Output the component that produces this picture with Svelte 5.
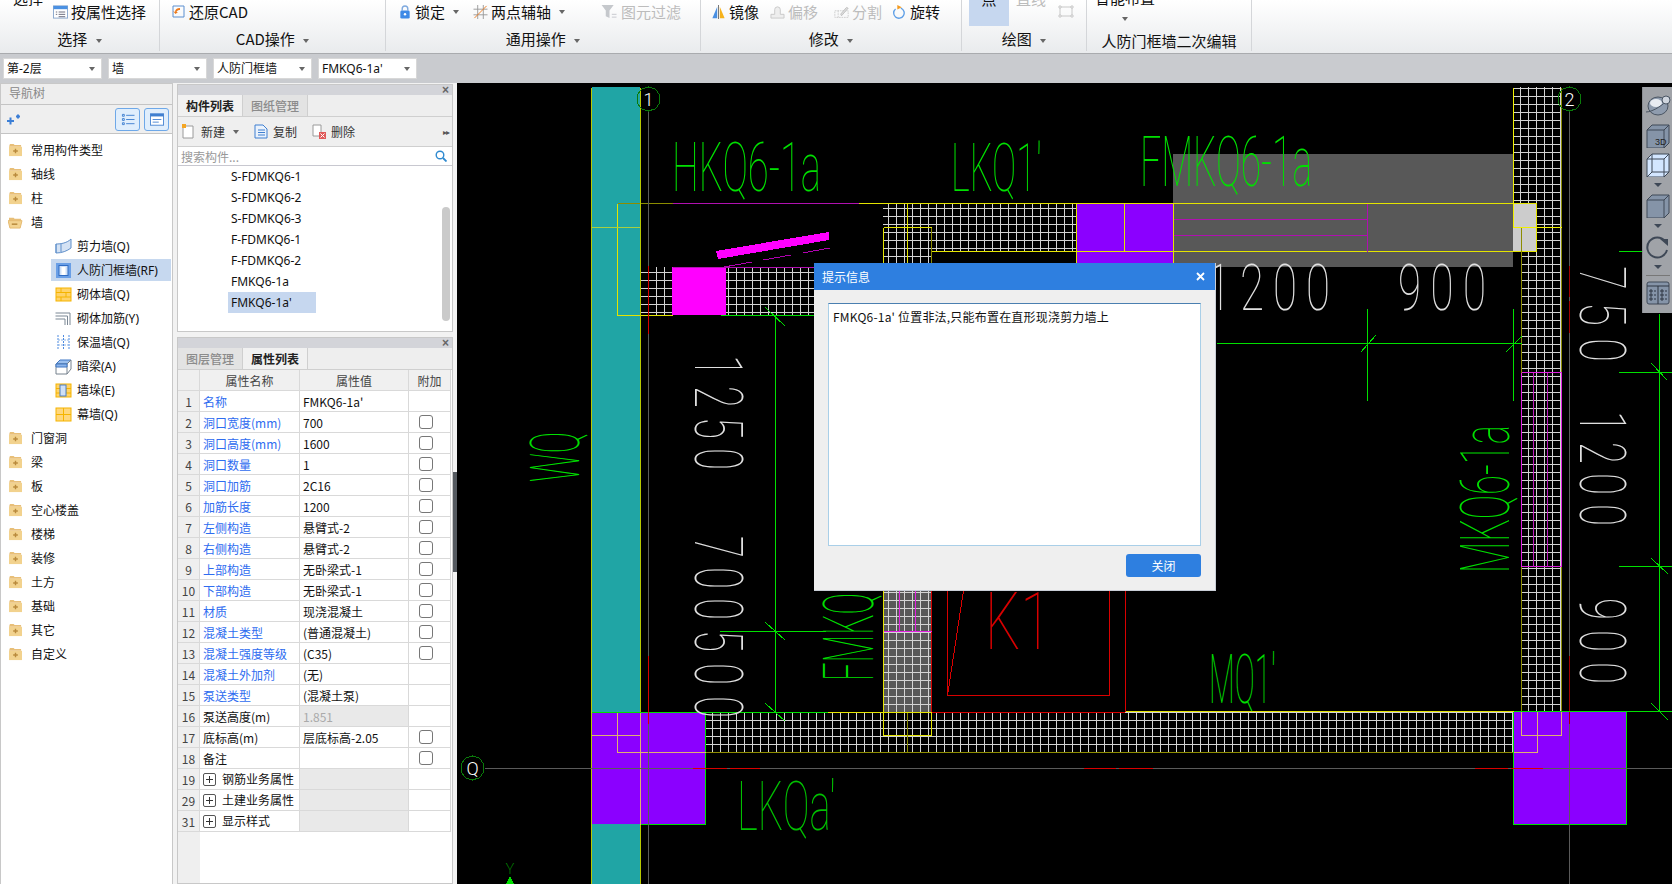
<script>
  const treeTop = ['常用构件类型', '轴线', '柱'];
  const treeWall = [
    { name: '剪力墙(Q)', icon: 'shear' },
    { name: '人防门框墙(RF)', icon: 'door', selected: true },
    { name: '砌体墙(Q)', icon: 'brick' },
    { name: '砌体加筋(Y)', icon: 'rebar' },
    { name: '保温墙(Q)', icon: 'insul' },
    { name: '暗梁(A)', icon: 'beam' },
    { name: '墙垛(E)', icon: 'pier' },
    { name: '幕墙(Q)', icon: 'curtain' }
  ];
  const treeBottom = ['门窗洞', '梁', '板', '空心楼盖', '楼梯', '装修', '土方', '基础', '其它', '自定义'];
  const parts = ['S-FDMKQ6-1', 'S-FDMKQ6-2', 'S-FDMKQ6-3', 'F-FDMKQ6-1', 'F-FDMKQ6-2', 'FMKQ6-1a', "FMKQ6-1a'"];
  const combos = ['第-2层', '墙', '人防门框墙', "FMKQ6-1a'"];

  const props = [
    [1, '名称', "FMKQ6-1a'", 0, 1],
    [2, '洞口宽度(mm)', '700', 1, 1],
    [3, '洞口高度(mm)', '1600', 1, 1],
    [4, '洞口数量', '1', 1, 1],
    [5, '洞口加筋', '2C16', 1, 1],
    [6, '加筋长度', '1200', 1, 1],
    [7, '左侧构造', '悬臂式-2', 1, 1],
    [8, '右侧构造', '悬臂式-2', 1, 1],
    [9, '上部构造', '无卧梁式-1', 1, 1],
    [10, '下部构造', '无卧梁式-1', 1, 1],
    [11, '材质', '现浇混凝土', 1, 1],
    [12, '混凝土类型', '(普通混凝土)', 1, 1],
    [13, '混凝土强度等级', '(C35)', 1, 1],
    [14, '混凝土外加剂', '(无)', 0, 1],
    [15, '泵送类型', '(混凝土泵)', 0, 1],
    [16, '泵送高度(m)', '1.851', 0, 0],
    [17, '底标高(m)', '层底标高-2.05', 1, 0],
    [18, '备注', '', 1, 0]
  ];
  const groups = [[19, '钢筋业务属性'], [29, '土建业务属性'], [31, '显示样式']];

  // drawing colours
  const Y = '#e4e400', D = '#8c8c00', G = '#00e000', M = '#b010b0', R = '#d80000', A = '#5a5a5a', O = '#e0b070';

  const grids = [
    [883, 203, 193, 48],
    [640, 267, 174, 48],
    [1513, 87, 48, 164],
    [1521, 251, 40, 460],
    [705, 712, 808, 40],
    [883, 251, 48, 14],
    [883, 590, 48, 122]
  ];

  const lines = [
    [617, 203, 672, 203, D], [672, 203, 858, 203, M], [858, 203, 1536, 203, Y],
    [617, 203, 617, 315, Y], [617, 315, 672, 315, Y], [591, 227, 640, 227, '#a8d040'],
    [591, 87, 591, 884, '#b8c800'], [640, 87, 640, 884, '#b8c800'],
    [931, 251, 1536, 251, Y], [883, 227, 931, 227, Y], [883, 227, 883, 265, Y], [907, 203, 907, 265, Y], [931, 227, 931, 265, D],
    [1076, 203, 1076, 265, Y], [1124, 203, 1124, 251, Y], [1173, 203, 1173, 265, Y],
    [1173, 219, 1367, 219, M], [1173, 235, 1367, 235, M], [1367, 203, 1367, 251, M],
    [1513, 87, 1513, 227, '#f0f000'], [1561, 87, 1561, 711, D], [1513, 227, 1561, 227, '#f0f000'], [1521, 227, 1521, 711, D], [1536, 203, 1536, 251, Y],
    [1521, 372, 1561, 372, '#e020e0'], [1521, 566, 1561, 566, '#e020e0'], [1521, 372, 1521, 566, '#e020e0'], [1561, 372, 1561, 566, '#e020e0'], [1533, 372, 1533, 566, '#c020c0'], [1547, 372, 1547, 566, '#c020c0'],
    [726, 267, 814, 267, M], [720, 315, 814, 315, G], [672, 267, 726, 267, M],
    [883, 590, 883, 712, Y], [931, 590, 931, 712, R], [883, 631, 931, 631, '#e020e0'], [899, 590, 899, 631, '#e020e0'], [915, 590, 915, 631, '#e020e0'],
    [883, 712, 883, 735, Y], [931, 712, 931, 735, Y], [883, 735, 931, 735, Y], [907, 712, 907, 752, D],
    [705, 712, 827, 712, G], [827, 712, 931, 712, Y], [931, 712, 1124, 712, R], [1124, 711, 1513, 711, Y], [705, 752, 1513, 752, D],
    [947, 590, 947, 695, R], [947, 695, 1109, 695, R], [1109, 590, 1109, 695, R], [1125, 590, 1125, 711, R], [963, 590, 947, 695, R],
    // corner rectangles over the purple
    [591, 712, 705, 712, G], [705, 712, 705, 824, G], [640, 824, 705, 824, G], [617, 712, 617, 752, O], [617, 752, 705, 752, O], [591, 735, 640, 735, O], [640, 712, 640, 824, O],
    [1513, 711, 1626, 711, G], [1513, 711, 1513, 824, G], [1513, 824, 1626, 824, G], [1626, 711, 1626, 824, G],
    [1521, 711, 1521, 735, O], [1561, 711, 1561, 735, O], [1521, 735, 1561, 735, O], [1537, 711, 1537, 752, O], [1513, 752, 1537, 752, O],
    // axes
    [648, 111, 648, 884, A], [1569, 111, 1569, 884, A], [484, 768, 1672, 768, A],
    [648, 265, 648, 333, R], [648, 655, 648, 723, R], [1569, 265, 1569, 296, '#a00000'], [1569, 300, 1569, 332, '#a00000'], [1569, 655, 1569, 723, '#a00000'],
    [692, 768, 726, 768, R], [729, 768, 759, 768, R], [1083, 768, 1115, 768, R], [1118, 768, 1152, 768, R], [1474, 768, 1507, 768, R], [1510, 768, 1542, 768, R],
    // dimension lines
    [775, 315, 775, 712, G], [765, 307, 785, 326, G], [765, 622, 785, 640, G], [765, 703, 785, 721, G], [719, 631, 825, 631, G],
    [1216, 343, 1521, 343, G], [1367, 308, 1367, 400, G], [1513, 308, 1513, 400, G], [1360, 352, 1375, 335, G], [1505, 352, 1521, 336, G],
    [1618, 251, 1642, 251, G], [1618, 372, 1672, 372, G], [1618, 566, 1672, 566, G], [1513, 711, 1672, 711, G], [1659, 313, 1659, 711, G],
    [1651, 363, 1667, 380, G], [1651, 558, 1668, 574, G], [1651, 703, 1668, 720, G]
  ];

  // text, x, y, length, cap height, rotation, colour
  const labels = [
    ['HKQ6-1a', 672, 191, 149, 49, 0, G],
    ["LKQ1'", 951, 191, 91, 48, 0, G],
    ['FMKQ6-1a', 1140, 186, 172, 50, 0, G],
    ["LKQa'", 737, 830, 99, 49, 0, '#00c000'],
    ["MQ1'", 1209, 703, 67, 49, 0, G],
    ['K1', 985, 649, 66, 57, 0, R],
    ['MKQ6-1a', 1509, 573, 148, 49, -90, G],
    ['FMKQ', 873, 681, 88, 50, -90, G],
    ['WQ', 579, 482, 50, 49, -90, G]
  ];

  // dimension figures are drawn digit by digit: text, x, y, pitch, digit width, cap height, rotation
  const dims = [
    ['1200', 1207, 310, 33, 24, 46, 0],
    ['900', 1398, 310, 32.500, 23, 46, 0],
    ['1250', 695, 355, 31, 22, 47, 90],
    ['700', 695, 536, 31, 22, 47, 90],
    ['500', 695, 630, 33, 22, 47, 90],
    ['750', 1580, 266, 36, 24, 46, 90],
    ['1200', 1580, 411, 31, 22, 46, 90],
    ['900', 1580, 598, 32, 22, 46, 90]
  ];
  const digits = dims.flatMap((d) =>
    [...d[0]].map((ch, i) => ({
      ch,
      x: d[6] ? d[1] : d[1] + i * d[3],
      y: d[6] ? d[2] + i * d[3] : d[2],
      w: d[4],
      size: d[5] / 0.711,
      rot: d[6]
    }))
  );

  const bubbles = [['1', 648, 99], ['2', 1569, 99], ['Q', 472, 768]];

  function ring(cx, cy, r) {
    const pts = [];
    for (let i = 0; i < 10; i++) {
      const a = (Math.PI * 2 * i) / 10 + Math.PI / 10;
      pts.push((cx + r * Math.cos(a)).toFixed(1) + ',' + (cy + r * Math.sin(a)).toFixed(1));
    }
    return pts.join(' ');
  }
</script>

{#snippet caret()}
  <span class="caret"></span>
{/snippet}

{#snippet folder(open)}
  <svg class="folder" viewBox="0 0 16 14">
    {#if open}
      <path d="M1 2h5l1 1h7v2H1z" fill="#e8bf78" />
      <path d="M0 5h15l-2 8H2z" fill="#f3d390" stroke="#e4b86c" />
      <rect x="4" y="8" width="6" height="1.6" fill="#b98a3c" />
    {:else}
      <path d="M2 0h4l1 1h7v2H1z" fill="#e8bf78" />
      <rect x="1" y="3" width="14" height="10" fill="#f2d28e" />
      <path d="M8 5v5M5.500 7.500h5" stroke="#b98a3c" stroke-width="1.500" />
    {/if}
  </svg>
{/snippet}

{#snippet wallIcon(kind)}
  <svg class="wall-icon" viewBox="0 0 17 17">
    {#if kind === 'shear'}
      <path d="M1 6c5 0 11-1 15-5v9c-4 3-9 5-15 5z" fill="#d4e2f4" stroke="#5f8fca" />
      <path d="M1 6v9M6 6v8" stroke="#5f8fca" fill="none" />
    {:else if kind === 'door'}
      <rect x="1" y="1" width="15" height="15" fill="#6a9fe6" />
      <rect x="4" y="3.500" width="9" height="10" fill="#cfe0f6" stroke="#2f6cc4" />
      <rect x="6.500" y="5" width="4" height="8" fill="#fff" />
    {:else if kind === 'brick' || kind === 'pier'}
      <rect x="1" y="2" width="15" height="13" fill="#ffd36a" stroke="#f5b400" />
      <path d="M1 6.500h15M1 11h15M6 2v4.500M11 6.500V11M6 11v4" stroke="#f5b400" fill="none" />
      {#if kind === 'pier'}
        <rect x="5" y="3" width="6" height="11" fill="#cfe0f6" stroke="#4f7fc0" />
      {/if}
    {:else if kind === 'rebar'}
      <path d="M0.500 3H15v12M0.500 6H12.500v9M0.500 9H10v6" stroke="#7b8794" fill="none" />
    {:else if kind === 'insul'}
      <path d="M3 1v15M8.500 1v15M14 1v15" stroke="#4f8be0" stroke-dasharray="2 1" fill="none" />
      <path d="M3 6h11M3 11h11" stroke="#8ab4ea" stroke-dasharray="2 1" fill="none" />
    {:else if kind === 'beam'}
      <path d="M1 6l4-4h11l-4 4z" fill="#9cc0ee" stroke="#3f77c4" />
      <path d="M1 6h11v10H1zM12 6l4-4v9l-4 5" fill="#fff" stroke="#77828e" />
      <path d="M1 6h11v3H1z" fill="#8fb6ea" stroke="#3f77c4" />
    {:else}
      <rect x="1" y="2" width="15" height="13" fill="#ffd77c" stroke="#f5b400" />
      <path d="M1 8.500h15M8.500 2v13" stroke="#f5b400" />
    {/if}
  </svg>
{/snippet}

<div class="app">
  <header class="ribbon">
    <section class="group w1">
      <div class="tools clip">
        <span class="high">选择</span>
        <span class="tool low">
          <svg class="ico" viewBox="0 0 16 14"><rect x="0.500" y="0.500" width="15" height="13" fill="#fff" stroke="#8aa7cc" /><rect x="0.500" y="0.500" width="15" height="3.500" fill="#4a90e2" /><path d="M6 7h7M6 9.500h7M6 12h7M3 7h1.500M3 9.500h1.500" stroke="#667" /></svg>
          按属性选择
        </span>
      </div>
      <div class="group-label">选择 {@render caret()}</div>
    </section>
    <section class="group w2">
      <div class="tools">
        <span class="tool">
          <svg class="ico" viewBox="0 0 15 14"><path d="M2 1h11v11H2z" fill="none" stroke="#5b8fd0" /><path d="M9 3c-3 0-5 1.500-5 4l-2-1 2.500 3L7 7 5.500 7C6 5.500 7.500 5 9 5z" fill="#ec7a1c" /></svg>
          还原CAD
        </span>
      </div>
      <div class="group-label">CAD操作 {@render caret()}</div>
    </section>
    <section class="group w3">
      <div class="tools">
        <span class="tool">
          <svg class="ico lock" viewBox="0 0 12 15"><path d="M3 6V4a3 3 0 016 0v2" fill="none" stroke="#7fa9de" stroke-width="1.500" /><rect x="1" y="6" width="10" height="8.500" rx="1.500" fill="#3f8ae6" /><circle cx="6" cy="10" r="1.300" fill="#fff" /></svg>
          锁定 {@render caret()}
        </span>
        <span class="tool t-axis">
          <svg class="ico" viewBox="0 0 15 15"><path d="M4.500 0v15M10.500 0v15M0 4.500h15M0 10.500h15" stroke="#9a9a9a" /><path d="M1 14L14 1" stroke="#ef7d1f" /></svg>
          两点辅轴 {@render caret()}
        </span>
        <span class="tool off t-filter">
          <svg class="ico filter" viewBox="0 0 17 15"><path d="M0 0h13L8.500 6v8l-4-2V6z" fill="#c5c8cc" /><path d="M11 10h5M11 13h5" stroke="#c5c8cc" /></svg>
          图元过滤
        </span>
      </div>
      <div class="group-label">通用操作 {@render caret()}</div>
    </section>
    <section class="group w4">
      <div class="tools">
        <span class="tool">
          <svg class="ico" viewBox="0 0 16 16"><path d="M6.500 2v13H1z" fill="#4a90e2" /><path d="M9.500 2v13H15z" fill="#f6b21b" /><path d="M8 0v16" stroke="#666" /></svg>
          镜像
        </span>
        <span class="tool off t-mod">
          <svg class="ico" viewBox="0 0 16 15"><path d="M1 10h4V5a3 3 0 016 0v5h4v4H1z" fill="#eee" stroke="#c8c8c8" /></svg>
          偏移
        </span>
        <span class="tool off t-split">
          <svg class="ico" viewBox="0 0 18 15"><path d="M1 6h16v8H1zM5 14V6" fill="none" stroke="#c8c8c8" stroke-dasharray="2 1" /><path d="M8 10l7-8 2 1-8 9z" fill="#ddd" stroke="#bbb" /></svg>
          分割
        </span>
        <span class="tool t-rotate">
          <svg class="ico" viewBox="0 0 15 16"><path d="M9 3.500a6 6 0 11-6 1" fill="none" stroke="#5b9de6" stroke-width="1.500" /><path d="M5 0l5 2.500L5 5z" fill="#f39a1e" /></svg>
          旋转
        </span>
      </div>
      <div class="group-label">修改 {@render caret()}</div>
    </section>
    <section class="group w5">
      <div class="tools clip draw">
        <span class="point high">点</span>
        <span class="high off">直线</span>
        <svg class="ico low rect-ico" viewBox="0 0 16 13"><path d="M2 2h12v9H2z" fill="none" stroke="#c8c8c8" /><path d="M1 1h2v2H1zM13 1h2v2h-2zM1 10h2v2H1zM13 10h2v2h-2z" fill="#fff" stroke="#c8c8c8" /></svg>
      </div>
      <div class="group-label">绘图 {@render caret()}</div>
    </section>
    <section class="group w6">
      <div class="tools clip smart">
        <span class="high">智能布置</span>
        {@render caret()}
      </div>
      <div class="group-label second">人防门框墙二次编辑</div>
    </section>
    <section class="group rest"></section>
  </header>

  <div class="combos">
    {#each combos as c}
      <div class="combo">{c}<span class="caret"></span></div>
    {/each}
  </div>

  <main class="main">
    <aside class="nav">
      <div class="nav-title">导航树</div>
      <div class="nav-tools">
        <svg class="spark" viewBox="0 0 13 11"><path d="M0 7h7M3.500 3.500v7M9 2.500h4M11 .5v4" stroke="#3c7fd6" stroke-width="2" /></svg>
        <span class="nav-btn"><svg viewBox="0 0 14 14"><path d="M1 1.500h2v2H1zM1 6h2v2H1zM1 10.500h2v2H1z" fill="none" stroke="#3f7fd0" /><path d="M5 2.500h9M5 7h9M5 11.500h9" stroke="#3f7fd0" /></svg></span>
        <span class="nav-btn"><svg viewBox="0 0 16 14"><rect x="0.500" y="0.500" width="15" height="13" fill="#fff" stroke="#3f7fd0" /><rect x="0.500" y="0.500" width="15" height="3" fill="#3f7fd0" /><path d="M3 7h10M3 10h7" stroke="#3f7fd0" /></svg></span>
      </div>
      <div class="tree">
        {#each treeTop as t}
          <div class="tree-row">{@render folder(false)}{t}</div>
        {/each}
        <div class="tree-row">{@render folder(true)}墙</div>
        {#each treeWall as w}
          <div class="tree-child" class:selected={w.selected}>{@render wallIcon(w.icon)}{w.name}</div>
        {/each}
        {#each treeBottom as t}
          <div class="tree-row">{@render folder(false)}{t}</div>
        {/each}
      </div>
    </aside>

    <div class="panels">
      <section class="panel top-panel">
        <div class="pin">×</div>
        <div class="tabs">
          <span class="tab active">构件列表</span>
          <span class="tab">图纸管理</span>
        </div>
        <div class="list-tools">
          <span class="lt">
            <svg class="lt-ico" viewBox="0 0 14 15"><path d="M3 2h8v12H1V4z" fill="#fff" stroke="#9a9a9a" /><path d="M0 0h4v4H0z" fill="#f5a623" /></svg>
            新建 <span class="caret"></span>
          </span>
          <span class="lt">
            <svg class="lt-ico" viewBox="0 0 14 15"><path d="M1 1h8l4 4v9H1z" fill="#eaf2fc" stroke="#3f7fd0" /><path d="M4 6h7M4 8.500h7M4 11h7" stroke="#3f7fd0" /></svg>
            复制
          </span>
          <span class="lt">
            <svg class="lt-ico" viewBox="0 0 14 15"><path d="M1 1h8v11H1z" fill="#fff" stroke="#9a9a9a" /><rect x="7" y="8" width="7" height="7" fill="#e05a5a" /><path d="M8.500 9.500l4 4M12.500 9.500l-4 4" stroke="#fff" /></svg>
            删除
          </span>
          <span class="more">▸▸</span>
        </div>
        <div class="search">
          <span>搜索构件...</span>
          <svg viewBox="0 0 12 12"><circle cx="5" cy="5" r="3.800" fill="none" stroke="#2f8ad0" stroke-width="1.400" /><path d="M8 8l3.500 3.500" stroke="#2f8ad0" stroke-width="1.800" /></svg>
        </div>
        <div class="part-list">
          {#each parts as p, i}
            <div class="part" class:selected={i === parts.length - 1}>{p}</div>
          {/each}
          <div class="scroll-thumb"></div>
        </div>
      </section>

      <section class="panel prop-panel">
        <div class="pin">×</div>
        <div class="tabs">
          <span class="tab">图层管理</span>
          <span class="tab active">属性列表</span>
        </div>
        <div class="prop-grid">
          <div class="cell num"></div>
          <div class="cell head">属性名称</div>
          <div class="cell head">属性值</div>
          <div class="cell head">附加</div>
          {#each props as p}
            <div class="cell num">{p[0]}</div>
            <div class="cell name" class:link={p[0] <= 15}>{p[1]}</div>
            <div class="cell val" class:locked={p[0] === 16}>{p[2]}</div>
            <div class="cell check">
              {#if p[0] !== 1 && p[0] !== 14 && p[0] !== 15 && p[0] !== 16}
                <span class="box"></span>
              {/if}
            </div>
          {/each}
          {#each groups as g}
            <div class="cell num">{g[0]}</div>
            <div class="cell name group-name"><span class="plus"></span>{g[1]}</div>
            <div class="cell val locked"></div>
            <div class="cell check"></div>
          {/each}
        </div>
      </section>
    </div>

    <div class="gutter"><span class="grip"></span></div>

    <div class="canvas">
      <svg class="drawing" viewBox="457 83 1215 801" width="1215" height="801">
        <defs>
          <pattern id="mesh" width="8" height="8" patternUnits="userSpaceOnUse">
            <path d="M0.500 0V8M0 0.500H8" stroke="#d4d4d4" stroke-width="1" fill="none" />
          </pattern>
        </defs>
        <rect x="592" y="87" width="48" height="797" fill="#20a5a5" />
        <rect x="1173" y="154" width="340" height="113" fill="#585858" />
        <rect x="883" y="590" width="48" height="122" fill="#585858" />
        <rect x="1076" y="203" width="97" height="64" fill="#8b00ff" />
        {#each grids as g}
          <rect x={g[0]} y={g[1]} width={g[2]} height={g[3]} fill="url(#mesh)" />
        {/each}
        <rect x="672" y="267" width="54" height="48" fill="#ff00ff" />
        <polygon points="716,251 829,232 829,240 718,259" fill="#ff00ff" />
        <path d="M724 267L830 248" stroke="#b000b0" stroke-dasharray="28 12" fill="none" />
        <rect x="1513" y="203" width="23" height="48" fill="#cccccc" />
        <rect x="591" y="712" width="114" height="112" fill="#8b00ff" />
        <rect x="1513" y="711" width="113" height="113" fill="#8b00ff" />
        {#each lines as l}
          <line x1={l[0] + 0.5} y1={l[1] + 0.5} x2={l[2] + 0.5} y2={l[3] + 0.5} stroke={l[4]} />
        {/each}
        {#each labels as t}
          <text
            class="cad"
            x={t[1]}
            y={t[2]}
            font-size={t[4] / 0.711}
            textLength={t[3]}
            lengthAdjust="spacingAndGlyphs"
            fill={t[6]}
            transform={t[5] ? `rotate(${t[5]} ${t[1]} ${t[2]})` : undefined}
          >{t[0]}</text>
        {/each}
        {#each digits as d}
          <text
            class="cad"
            x={d.x}
            y={d.y}
            font-size={d.size}
            textLength={d.w}
            lengthAdjust="spacingAndGlyphs"
            fill="#e0e0e0"
            transform={d.rot ? `rotate(${d.rot} ${d.x} ${d.y})` : undefined}
          >{d.ch}</text>
        {/each}
        {#each bubbles as b}
          <polygon points={ring(b[1] + 0.5, b[2], 12)} fill="none" stroke="#0a7a0a" />
          <text class="cad bubble" x={b[1] + 0.5} y={b[2] + 7} text-anchor="middle">{b[0]}</text>
        {/each}
        <text class="cad axis-y" x="510" y="874" text-anchor="middle">Y</text>
        <path d="M510 876l-4 8h8z" fill="#00e000" />
      </svg>

      <div class="view-bar">
        <svg viewBox="0 0 26 22" class="v-ball"><ellipse cx="13" cy="12" rx="10" ry="9" fill="#8f9cae" stroke="#4a5563" /><ellipse cx="11" cy="9" rx="6" ry="4" fill="#e8ecf2" /><path d="M1 18C8 18 20 10 25 3" stroke="#4a5563" fill="none" /><circle cx="21" cy="6" r="4" fill="#cfd5de" stroke="#4a5563" /></svg>
        <svg viewBox="0 0 24 24" class="v-cube"><path d="M1 6l5-5h17v18l-5 5H1z" fill="#8594a8" stroke="#3e4856" /><path d="M1 6h17v18M18 6l5-5" fill="none" stroke="#3e4856" /><text x="9" y="21" class="v-3d">3D</text></svg>
        <svg viewBox="0 0 24 24" class="v-cube"><path d="M1 6l5-5h17v18l-5 5H1z" fill="#d3e6ff" stroke="#3e4856" /><path d="M1 6h17v18M18 6l5-5M6 1v18h17M6 19l-5 5" fill="none" stroke="#3e4856" /></svg>
        <span class="v-caret"></span>
        <svg viewBox="0 0 24 24" class="v-cube"><path d="M1 6l5-5h17v18l-5 5H1z" fill="#8594a8" stroke="#3e4856" /><path d="M1 6h17v18M18 6l5-5" fill="none" stroke="#3e4856" /></svg>
        <span class="v-caret"></span>
        <svg viewBox="0 0 24 24" class="v-cube"><path d="M19 6A10 10 0 1021 15" fill="none" stroke="#3e4856" stroke-width="2" /><path d="M14 4h8v7z" fill="#3e4856" /></svg>
        <span class="v-caret"></span>
        <span class="v-rule"></span>
        <svg viewBox="0 0 24 24" class="v-cube"><rect x="1" y="1" width="22" height="22" rx="2" fill="#8594a8" stroke="#3e4856" /><path d="M1 5h22M12 5v18M4 9h2v2H4zM4 13h2v2H4zM4 17h2v2H4zM15 9h2v2h-2zM15 13h2v2h-2zM15 17h2v2h-2zM8 10h2M8 14h2M8 18h2M19 10h2M19 14h2M19 18h2" fill="none" stroke="#2e3742" /></svg>
      </div>

      <div class="dialog">
        <div class="dialog-head">
          <span>提示信息</span>
          <svg viewBox="0 0 9 9"><path d="M1 1l7 7M8 1L1 8" stroke="#fff" stroke-width="1.800" /></svg>
        </div>
        <div class="dialog-body">
          <div class="message">FMKQ6-1a' 位置非法,只能布置在直形现浇剪力墙上</div>
          <div class="dialog-foot"><button class="close">关闭</button></div>
        </div>
      </div>
    </div>
  </main>
</div>

<style>
  :global(body) {
    margin: 0;
    overflow: hidden;
  }

  .app {
    width: 1672px;
    height: 884px;
    display: flex;
    flex-direction: column;
    font-family: "Noto Sans", "Noto Sans CJK SC", sans-serif;
    font-size: 12px;
    color: #111;
    background: #f2f2f2;
    overflow: hidden;
  }

  /* ribbon */
  .ribbon {
    height: 54px;
    flex-shrink: 0;
    display: flex;
    background: linear-gradient(#ffffff, #e9ebed);
    border-bottom: 1px solid #a9abae;
    box-sizing: border-box;
    font-size: 15px;
    line-height: 20px;
    font-family: "Noto Sans CJK SC", "Noto Sans", sans-serif;
  }

  .group {
    height: 51px;
    box-sizing: border-box;
    border-right: 1px solid #d4d6d9;
    display: flex;
    flex-direction: column;
    flex-shrink: 0;
    overflow: hidden;
  }

  .w1 { width: 160px; }
  .w2 { width: 226px; }
  .w3 { width: 315px; }
  .w4 { width: 261px; }
  .w5 { width: 125px; }
  .w6 { width: 165px; }
  .rest { flex: 1; border-right: none; }

  .tools {
    height: 27px;
    display: flex;
    align-items: flex-start;
    padding-top: 2px;
    box-sizing: border-box;
  }

  .w1 .tools { padding-left: 13px; gap: 10px; }
  .w2 .tools { padding-left: 11px; }
  .w3 .tools { padding-left: 13px; }
  .w4 .tools { padding-left: 10px; }

  .tool {
    display: inline-flex;
    align-items: center;
    gap: 3px;
    white-space: nowrap;
  }

  .off { color: #bcbcbc; }

  .high {
    margin-top: -14px;
    white-space: nowrap;
  }

  .ico {
    width: 15px;
    height: 14px;
    flex-shrink: 0;
  }

  .ico.lock { width: 12px; margin-right: 1px; }
  .ico.filter { width: 17px; }

  .t-axis { margin-left: 14px; }
  .t-filter { margin-left: 36px; }
  .t-mod { margin-left: 11px; }
  .t-split { margin-left: 16px; }
  .t-rotate { margin-left: 10px; }

  .draw { padding: 0 0 0 7px; height: 27px; }
  .draw .high { margin-top: -11px; }
  .point {
    width: 40px;
    height: 37px;
    background: #c6d7ef;
    text-align: center;
    display: block;
  }
  .draw .off { margin-left: 7px; }
  .rect-ico { width: 16px; height: 13px; margin: 5px 0 0 12px; }

  .smart {
    width: 76px;
    flex-direction: column;
    align-items: center;
    padding-top: 0;
  }
  .smart .high { margin-top: -12px; }
  .smart .caret { margin: 9px 0 0; }

  .group-label {
    text-align: center;
    line-height: 20px;
    margin-top: 2px;
  }

  .second {
    margin-top: 5px;
  }

  .caret {
    display: inline-block;
    width: 0;
    height: 0;
    margin-left: 5px;
    vertical-align: middle;
    border-left: 3.500px solid transparent;
    border-right: 3.500px solid transparent;
    border-top: 4px solid #666;
  }

  /* combo row */
  .combos {
    height: 29px;
    flex-shrink: 0;
    box-sizing: border-box;
    display: flex;
    gap: 6px;
    padding: 4px 0 0 3px;
    background: #c9cbcf;
  }

  .combo {
    width: 99px;
    height: 21px;
    box-sizing: border-box;
    position: relative;
    background: #fff;
    border: 1px solid #d8d8d8;
    padding-left: 3px;
    line-height: 19px;
  }

  .combo .caret {
    position: absolute;
    right: 6px;
    top: 8px;
    margin: 0;
  }

  .main {
    flex: 1;
    min-height: 0;
    display: flex;
  }

  /* nav tree */
  .nav {
    width: 173px;
    flex-shrink: 0;
    box-sizing: border-box;
    border: 1px solid #c8c8c8;
    border-width: 1px 1px 0 1px;
    background: #fff;
  }

  .nav-title {
    height: 20px;
    line-height: 20px;
    padding-left: 8px;
    color: #888;
    background: #eeeeee;
    border-bottom: 1px solid #c4c4c4;
  }

  .nav-tools {
    height: 29px;
    box-sizing: border-box;
    display: flex;
    align-items: center;
    padding: 0 3px 0 6px;
    background: #efefef;
    border-bottom: 1px solid #c4c4c4;
  }

  .spark { width: 13px; height: 11px; margin-right: auto; }

  .nav-btn {
    width: 25px;
    height: 23px;
    box-sizing: border-box;
    margin-left: 4px;
    display: flex;
    align-items: center;
    justify-content: center;
    background: #e0eefc;
    border: 1px solid #6ea8e8;
    border-radius: 3px;
  }

  .nav-btn svg { width: 14px; height: 13px; }

  .tree {
    padding-top: 4px;
  }

  .tree-row {
    height: 24px;
    display: flex;
    align-items: center;
    padding-left: 7px;
    gap: 8px;
  }

  .folder { width: 15px; height: 13px; flex-shrink: 0; }

  .tree-child {
    height: 24px;
    box-sizing: border-box;
    margin: 0 1px 0 50px;
    border-top: 1.500px solid transparent;
    border-bottom: 1.500px solid transparent;
    background-clip: padding-box;
    display: flex;
    align-items: center;
    padding-left: 4px;
    gap: 5px;
  }

  .tree-child.selected { background-color: #c6d8ef; }

  .wall-icon { width: 17px; height: 17px; flex-shrink: 0; }

  /* middle panels */
  .panels {
    width: 276px;
    margin-left: 4px;
    flex-shrink: 0;
    display: flex;
    flex-direction: column;
    gap: 5px;
    padding-top: 1px;
    box-sizing: border-box;
  }

  .panel {
    box-sizing: border-box;
    border: 1px solid #c8c8c8;
    background: #fff;
    font-family: "Noto Sans CJK SC", "Noto Sans", sans-serif;
  }

  .top-panel { height: 248px; }
  .prop-panel { flex: 1; min-height: 0; overflow: hidden; }

  .pin {
    height: 10px;
    line-height: 10px;
    font-size: 12px;
    text-align: right;
    padding-right: 3px;
    color: #666;
    background: #d3d4d9;
    font-family: "Liberation Sans", sans-serif;
    font-weight: bold;
  }

  .tabs {
    height: 22px;
    box-sizing: border-box;
    display: flex;
    background: #eeeeee;
    border-bottom: 1px solid #cfcfcf;
  }

  .tab {
    width: 65px;
    box-sizing: border-box;
    padding-left: 8px;
    line-height: 21px;
    color: #8b8b8b;
    background: #e3e3e3;
    border-right: 1px solid #cfcfcf;
    font-weight: 500;
  }

  .tab.active {
    background: #f1f1f1;
    color: #222;
    font-weight: 700;
  }

  .list-tools {
    height: 30px;
    box-sizing: border-box;
    display: flex;
    align-items: center;
    padding-left: 4px;
    background: #efefef;
    border-bottom: 1px solid #cfcfcf;
    color: #333;
  }

  .lt {
    display: inline-flex;
    align-items: center;
    gap: 5px;
    margin-right: 15px;
    white-space: nowrap;
  }

  .lt .caret { margin-left: 3px; }

  .lt-ico { width: 14px; height: 15px; }

  .more {
    margin-left: auto;
    padding-right: 3px;
    font-size: 8px;
    color: #555;
    letter-spacing: -1px;
  }

  .search {
    height: 19px;
    box-sizing: border-box;
    display: flex;
    align-items: center;
    justify-content: space-between;
    padding: 0 5px 0 3px;
    color: #999;
    border-bottom: 1px solid #c8c8d0;
  }

  .search svg { width: 12px; height: 12px; }

  .part-list {
    position: relative;
    height: 165px;
  }

  .part {
    width: 88px;
    height: 21px;
    line-height: 22px;
    margin-left: 50px;
    padding-left: 3px;
    box-sizing: border-box;
    font-family: "Noto Sans", sans-serif;
  }

  .part.selected { background: #c6d7ef; }

  .scroll-thumb {
    position: absolute;
    right: 2px;
    top: 41px;
    width: 8px;
    height: 114px;
    border-radius: 4px;
    background: #cacaca;
  }

  /* property grid */
  .prop-grid {
    display: grid;
    grid-template-columns: 22px 100px 109px 42px;
    grid-auto-rows: 21px;
    background: linear-gradient(90deg, #efefef 22px, #fff 22px);
    height: 520px;
  }

  .cell {
    box-sizing: border-box;
    border-right: 1px solid #d9d9d9;
    border-bottom: 1px solid #d9d9d9;
    line-height: 22px;
    padding-left: 3px;
    white-space: nowrap;
    overflow: hidden;
    background: #fff;
  }

  .num {
    padding: 0;
    text-align: center;
    background: #efefef;
    color: #444;
  }

  .head {
    padding: 0;
    text-align: center;
    background: #f0f0f0;
    color: #444;
  }

  .link { color: #2e6cf0; }

  .locked {
    background: #e9e9e9;
    color: #aaa;
  }

  .check {
    padding: 0;
    display: flex;
    align-items: center;
    justify-content: center;
  }

  .box {
    width: 14px;
    height: 14px;
    box-sizing: border-box;
    border: 1px solid #777;
    border-radius: 3px;
    margin-right: 7px;
  }

  .group-name {
    display: flex;
    align-items: center;
    gap: 6px;
  }

  .plus {
    position: relative;
    width: 13px;
    height: 13px;
    box-sizing: border-box;
    border: 1px solid #555;
    border-radius: 2px;
    flex-shrink: 0;
    background:
      linear-gradient(#333, #333) center / 7px 1px no-repeat,
      linear-gradient(#333, #333) center / 1px 7px no-repeat;
  }

  .gutter {
    width: 4px;
    flex-shrink: 0;
    position: relative;
    background: #f4f4f4;
  }

  .grip {
    position: absolute;
    left: 0;
    top: 389px;
    width: 4px;
    height: 100px;
    background: #555a60;
  }

  /* drawing canvas */
  .canvas {
    flex: 1;
    min-width: 0;
    position: relative;
    background: #000;
    overflow: hidden;
  }

  .drawing {
    display: block;
    shape-rendering: crispEdges;
  }

  .cad {
    font-family: "Roboto", "Inter", sans-serif;
    font-weight: 100;
    shape-rendering: auto;
  }

  .bubble {
    font-size: 18px;
    fill: #fff;
    font-weight: 300;
  }

  .axis-y {
    font-size: 14px;
    fill: #00e000;
  }

  .view-bar {
    position: absolute;
    right: 0;
    top: 4px;
    width: 30px;
    height: 226px;
    background: #a0a3a8;
    display: flex;
    flex-direction: column;
    align-items: center;
    padding-top: 7px;
    box-sizing: border-box;
    border-left: 1px solid #8d9095;
  }

  .v-ball { width: 26px; height: 22px; margin-bottom: 8px; }
  .v-cube { width: 24px; height: 24px; margin-bottom: 5px; flex-shrink: 0; }
  .v-3d { font: 9px "Liberation Sans", sans-serif; fill: #222; }

  .v-caret {
    width: 0;
    height: 0;
    margin: 1px 0 7px;
    border-left: 4px solid transparent;
    border-right: 4px solid transparent;
    border-top: 4px solid #3e4856;
  }

  .v-rule {
    width: 24px;
    height: 1px;
    background: #777;
    margin: -1px 0 5px;
  }

  /* dialog */
  .dialog {
    position: absolute;
    left: 357px;
    top: 180px;
    width: 402px;
    height: 328px;
    box-sizing: border-box;
    background: #efefef;
    border-right: 1px solid #c9ced6;
    border-bottom: 1px solid #c9ced6;
    display: flex;
    flex-direction: column;
    font-family: "Noto Sans CJK SC", "Noto Sans", sans-serif;
  }

  .dialog-head {
    height: 27px;
    flex-shrink: 0;
    padding: 0 10px 0 8px;
    display: flex;
    align-items: center;
    justify-content: space-between;
    background: #2e7fe0;
    color: #fff;
  }

  .dialog-head svg { width: 9px; height: 9px; }

  .dialog-body {
    flex: 1;
    display: flex;
    flex-direction: column;
    padding: 13px 14px 13px 14px;
  }

  .message {
    height: 243px;
    box-sizing: border-box;
    background: #fff;
    border: 1px solid #a9cfe8;
    border-top-color: #4a7fb0;
    padding: 4px 4px;
    line-height: 18px;
    letter-spacing: 0.2px;
  }

  .dialog-foot {
    display: flex;
    justify-content: flex-end;
    margin-top: 8px;
  }

  .close {
    width: 75px;
    height: 23px;
    padding: 0;
    border: none;
    border-radius: 3px;
    background: #2e7fe0;
    color: #fff;
    font: inherit;
    font-size: 12px;
  }
</style>
